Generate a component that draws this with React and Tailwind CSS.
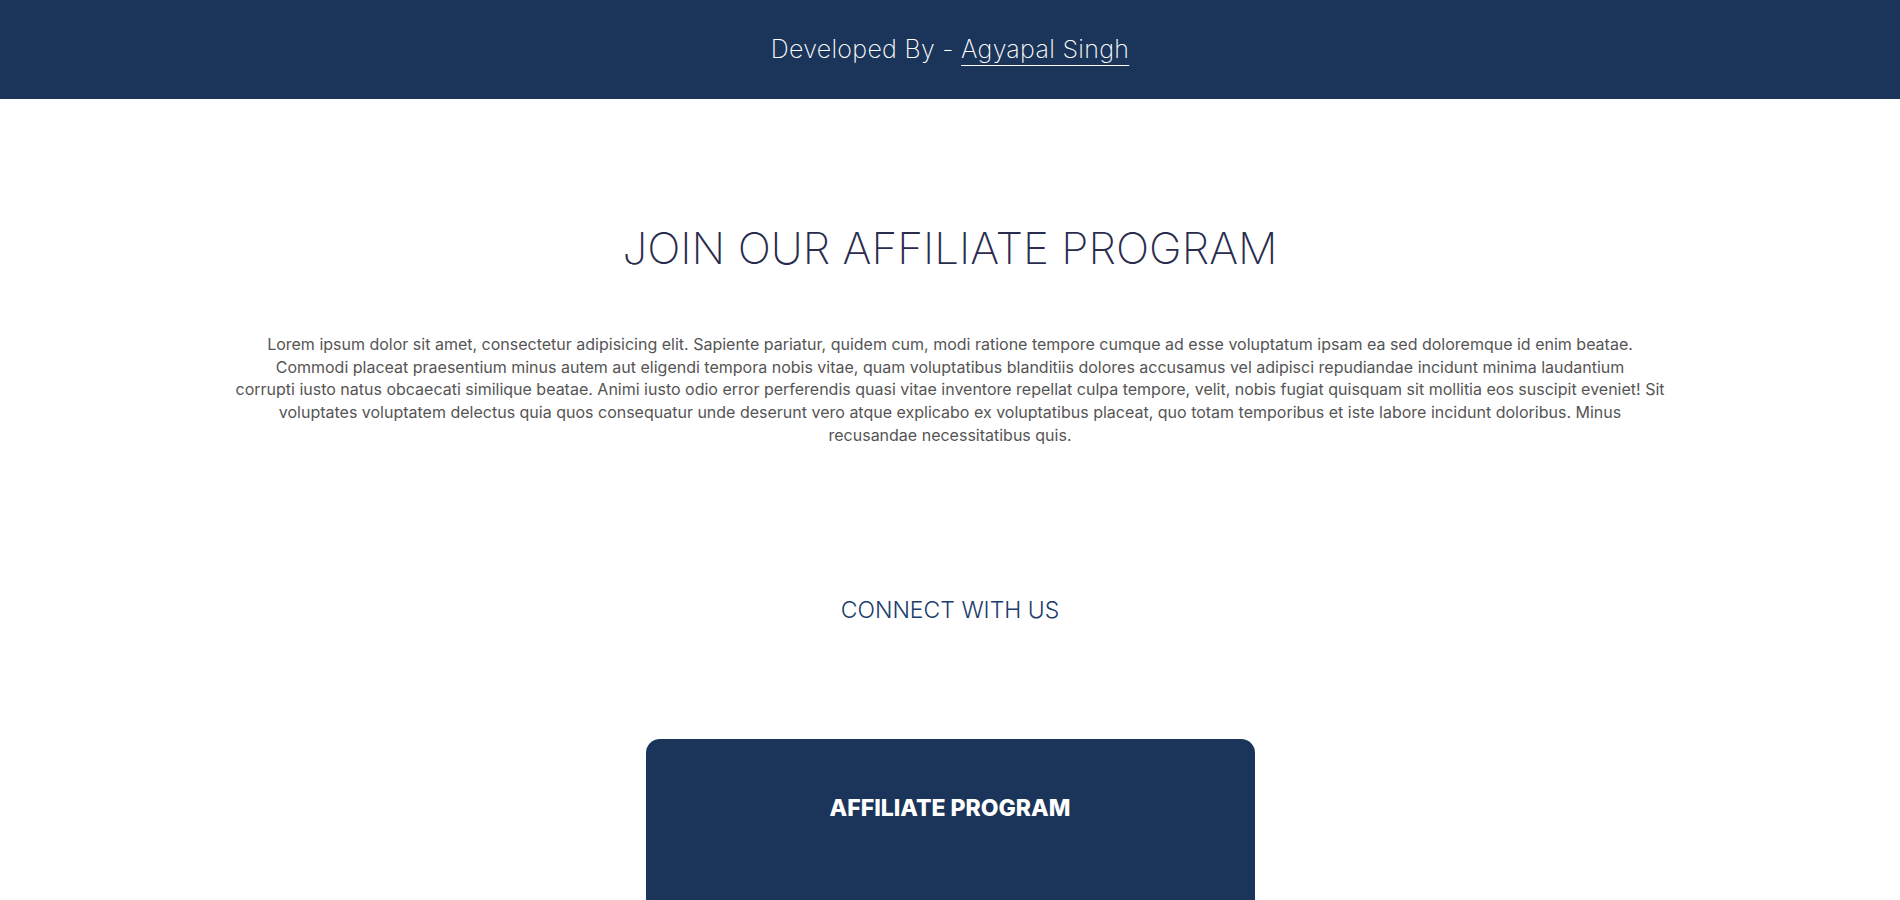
import React from 'react';

// line breaks follow the reference wrapping
const loremLines = [
  'Lorem ipsum dolor sit amet, consectetur adipisicing elit. Sapiente pariatur, quidem cum, modi ratione tempore cumque ad esse voluptatum ipsam ea sed doloremque id enim beatae.',
  'Commodi placeat praesentium minus autem aut eligendi tempora nobis vitae, quam voluptatibus blanditiis dolores accusamus vel adipisci repudiandae incidunt minima laudantium',
  'corrupti iusto natus obcaecati similique beatae. Animi iusto odio error perferendis quasi vitae inventore repellat culpa tempore, velit, nobis fugiat quisquam sit mollitia eos suscipit eveniet! Sit',
  'voluptates voluptatem delectus quia quos consequatur unde deserunt vero atque explicabo ex voluptatibus placeat, quo totam temporibus et iste labore incidunt doloribus. Minus',
  'recusandae necessitatibus quis.',
];

const App = () => {
  return (
    <div className="min-h-screen bg-white font-['Inter',sans-serif]">
      {/* Top bar */}
      <header className="h-[99px] bg-[#1b355a] flex items-center justify-center">
        <p className="text-[25px] font-extralight text-white tracking-[0.3px]">
          Developed By -{' '}
          <a href="#" className="underline decoration-1 underline-offset-[7px]">
            Agyapal Singh
          </a>
        </p>
      </header>

      {/* Intro */}
      <section className="pt-[127px] flex flex-col items-center">
        <h1 className="text-[44px] leading-none font-extralight text-[#2a2c4e]">
          JOIN OUR AFFILIATE PROGRAM
        </h1>
        <p className="mt-[63px] w-[1430px] text-center text-[16px] leading-[22.7px] text-[#555]">
          {loremLines.map((line, i) => (
            <span key={i} className="block whitespace-nowrap">
              {line}
            </span>
          ))}
        </p>
      </section>

      {/* Connect */}
      <section className="pt-[146px] flex flex-col items-center">
        <h2 className="text-[23px] font-light text-[#1b3d6c]">CONNECT WITH US</h2>

        <div className="mt-[112px] w-[609px] h-[360px] bg-[#1b355a] rounded-[14px] flex flex-col items-center pt-[52px]">
          <h3 className="text-[23px] font-extrabold text-white">AFFILIATE PROGRAM</h3>
        </div>
      </section>
    </div>
  );
};

export default App;
